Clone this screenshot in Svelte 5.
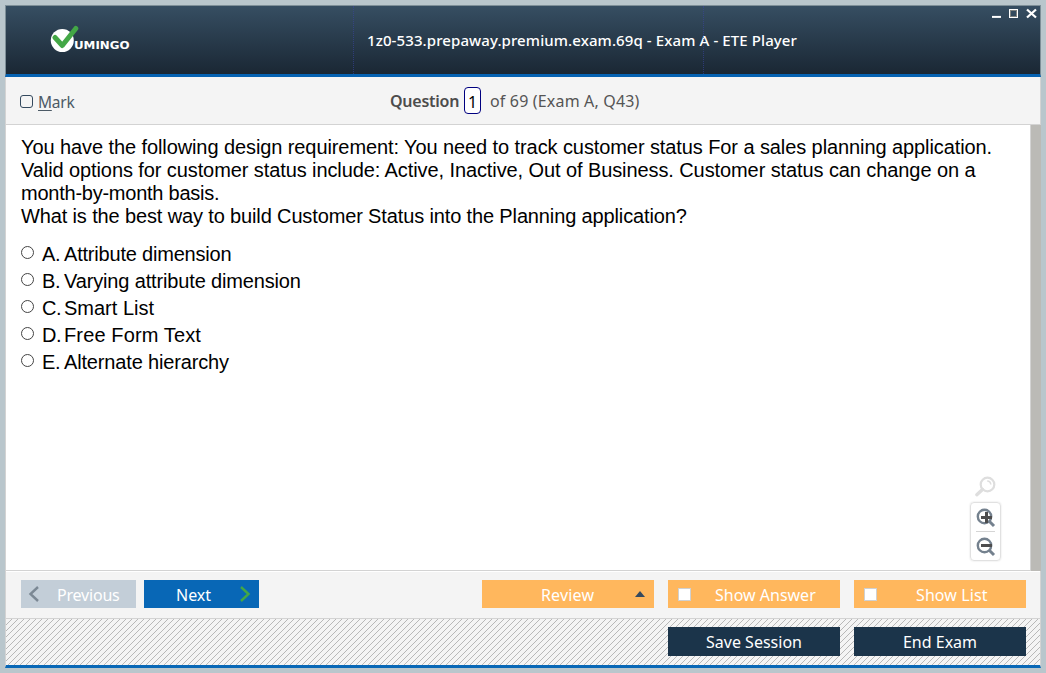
<script>
  const options = [
    ['A.', 'Attribute dimension', -0.2],
    ['B.', 'Varying attribute dimension', -0.15],
    ['C.', 'Smart List', 0],
    ['D.', 'Free Form Text', 0.13],
    ['E.', 'Alternate hierarchy', -0.16]
  ];
</script>

<div class="window">
  <header>
    <svg class="logo" width="84" height="30" viewBox="0 0 84 30">
      <circle cx="12.3" cy="15.5" r="11.5" fill="#fff" />
      <path d="M5 12.5 L12.3 20.5 L25.8 3.5" fill="none" stroke="#43a746" stroke-width="5" stroke-linecap="round" stroke-linejoin="round" />
      <text x="24" y="24" textLength="55.5" lengthAdjust="spacingAndGlyphs" fill="#fff">UMINGO</text>
    </svg>
    <div class="title">1z0-533.prepaway.premium.exam.69q - Exam A - ETE Player</div>
    <svg class="controls" width="46" height="14" viewBox="0 0 46 14">
      <path d="M1 10.9 H10" stroke="#fff" stroke-width="2" />
      <rect x="18.5" y="3.5" width="8" height="8" fill="none" stroke="#fff" />
      <rect x="19.5" y="4.5" width="6" height="6" fill="none" stroke="#80827f" />
      <path d="M36 3.5 L45 11.5 M45 3.5 L36 11.5" stroke="#fff" stroke-width="2.3" />
    </svg>
  </header>

  <section class="info">
    <label class="mark"><i></i><span><u>M</u>ark</span></label>
    <div class="position"><b>Question</b><span class="num">1</span><span class="of">of 69 (Exam A, Q43)</span></div>
  </section>

  <main>
    <div class="content">
      <div class="question">
        <p class="l1">You have the following design requirement: You need to track customer status For a sales planning application.</p>
        <p class="l2">Valid options for customer status include: Active, Inactive, Out of Business. Customer status can change on a</p>
        <p class="l3">month-by-month basis.</p>
        <p class="l4">What is the best way to build Customer Status into the Planning application?</p>
      </div>
      {#each options as [letter, text, spacing]}
        <div class="option"><i></i><span class="letter">{letter}</span><span style:letter-spacing="{spacing}px">{text}</span></div>
      {/each}
      <div class="zoom">
        <svg width="24" height="22" viewBox="0 0 24 22" fill="none" stroke="#dedede">
          <circle cx="13.5" cy="8.5" r="6.8" stroke-width="2.2" />
          <path d="M8.5 13.5 L2.8 18.7" stroke-width="3.4" stroke-linecap="round" />
          <path d="M13.2 5 Q16.5 5 16.8 8.5" stroke-width="1.6" />
        </svg>
        <div class="zoombox">
          <svg width="20" height="20" viewBox="0 0 20 20" fill="none">
            <circle cx="8.5" cy="8.5" r="6.7" stroke="#74818e" stroke-width="2.4" />
            <path d="M13 13 L18 18" stroke="#74818e" stroke-width="3" />
            <path d="M5 9.5 H16 M10.5 4 V15" stroke="#4d4d4d" stroke-width="3" />
          </svg>
          <hr />
          <svg width="20" height="20" viewBox="0 0 20 20" fill="none">
            <circle cx="8.5" cy="8.5" r="6.7" stroke="#74818e" stroke-width="2.4" />
            <path d="M13 13 L18 18" stroke="#74818e" stroke-width="3" />
            <path d="M5 8.5 H16" stroke="#4d4d4d" stroke-width="3" />
          </svg>
        </div>
      </div>
    </div>
    <div class="scroll"></div>
  </main>

  <nav>
    <button class="prev">
      <svg width="12" height="18" viewBox="0 0 12 18"><path d="M10 2 L2.5 9 L10 16" fill="none" stroke="#7b8894" stroke-width="2.4" /></svg>
      <span>Previous</span>
    </button>
    <button class="next">
      <span>Next</span>
      <svg width="12" height="18" viewBox="0 0 12 18"><path d="M2 2 L9.5 9 L2 16" fill="none" stroke="#43a746" stroke-width="2.4" /></svg>
    </button>
    <button class="orange review"><span>Review</span><svg width="10" height="6" viewBox="0 0 10 6"><path d="M0 6 L5 0 L10 6Z" fill="#34495e" /></svg></button>
    <button class="orange"><i></i><span class="ans">Show Answer</span></button>
    <button class="orange"><i></i><span class="list">Show List</span></button>
  </nav>

  <footer>
    <svg class="hatch" width="100%" height="100%" shape-rendering="crispEdges">
      <defs><pattern id="lines" width="6" height="6" patternUnits="userSpaceOnUse">
        {#each [0, 1, 2, 3, 4, 5] as n}
          <rect x={n} y={5 - n} width="1" height="1" fill="#b8b8b8" />
        {/each}
      </pattern></defs>
      <rect width="100%" height="100%" fill="url(#lines)" />
    </svg>
    <button class="save">Save Session</button>
    <button class="end">End Exam</button>
  </footer>
</div>

<style>
  :global(body) { background: #b9c6cc; overflow: hidden; }
  * { box-sizing: border-box; }
  .window { width: 1036px; height: 663px; margin: 5px; font-family: "Noto Sans", sans-serif; font-size: 16px; display: flex; flex-direction: column; }
  header { height: 72px; display: flex; border: 1px solid #7e8f98; border-bottom: 3px solid #0562b2; background: linear-gradient(#364e62, #1a2734); color: #fff; position: relative; }
  header::before { content: ""; position: absolute; left: 347px; top: 0; width: 349px; height: 68px; border: 1px dotted #3944a0; border-width: 0 1px; opacity: .6; }
  .logo { margin: 19px 0 0 44px; flex: none; }
  .logo text { font: bold 9.8px "DejaVu Sans", sans-serif; }
  .title { margin: 23px 0 0 233px; width: 430px; font: 500 15px/22px "Noto Sans", sans-serif; white-space: nowrap; letter-spacing: .1px; }
  .controls { margin: 0 3px 0 auto; flex: none; }
  .info { height: 48px; display: flex; background: #f4f4f4; border: solid #d3d3d3; border-width: 0 1px 1px; color: #555; }
  .mark { width: 384px; padding: 14px 0 0 14px; display: flex; gap: 5px; line-height: 22px; color: #4c5a66; font-size: 15.5px; letter-spacing: -.25px; }
  .mark i { width: 13px; height: 13px; margin-top: 4px; border: 1px solid #34495e; border-radius: 3px; }
  .mark u { text-underline-offset: 2px; }
  .position { display: flex; padding-top: 9px; line-height: 31px; white-space: nowrap; }
  .position b { font-weight: 600; color: #4c4c4c; width: 74px; letter-spacing: -.25px; }
  .num { width: 17px; height: 27px; line-height: 29px; margin-top: 1px; border: 1px solid #000080; border-radius: 4px; background: #fff; color: #000; text-align: center; }
  .of { margin-left: 9px; letter-spacing: .17px; }
  main { height: 446px; display: flex; border-left: 1px solid #d3d3d3; background: #fff; }
  .content { width: 1025px; padding: 11px 0 0 15px; position: relative; font: 20px/23px "Liberation Sans", Arial, sans-serif; color: #000; border: solid #d3d3d3; border-width: 0 1px 1px 0; }
  .scroll { flex: 1; background: #bbbab6; }
  .question { height: 105px; white-space: nowrap; }
  p { margin: 0; }
  .l1 { letter-spacing: -.09px; }
  .l2 { letter-spacing: -.093px; }
  .l3 { letter-spacing: -.24px; }
  .l4 { letter-spacing: -.135px; }
  .option { display: flex; height: 27px; line-height: 27px; white-space: nowrap; }
  .option i { width: 13px; height: 13px; margin: 5px 8px 0 0; border: 1px solid #444; border-radius: 50%; }
  .letter { width: 22px; letter-spacing: -.4px; }
  .zoom { position: absolute; left: 964px; top: 351px; width: 31px; }
  .zoom svg { display: block; margin-left: 4px; }
  .zoombox { height: 59px; margin-top: 4px; padding-top: 5px; border: 1px solid #e1e1e1; border-radius: 4px; box-shadow: 0 0 2px #ddd; }
  .zoom .zoombox svg { margin-left: 5px; }
  hr { width: 19px; margin: 3px 0 5px 5px; border: 0; border-top: 1px solid #d5d5d5; }
  nav { height: 48px; display: flex; padding: 9px 14px 0 15px; border: solid #d3d3d3; border-width: 0 1px 1px; background: #f4f4f4; box-shadow: inset 0 1px #fff; }
  button { border: 0; border-radius: 0; padding: 0; font: 16px/28px "Noto Sans", sans-serif; color: #fff; height: 28px; display: flex; align-items: center; white-space: nowrap; }
  nav span { padding-top: 2px; }
  .prev { width: 115px; background: #c3ced8; margin-right: 8px; padding-left: 7px; }
  .prev span { margin-left: 17px; letter-spacing: -.2px; }
  .next { width: 115px; background: #0867b6; margin-right: 223px; padding-left: 32px; }
  .next svg { margin-left: 28px; }
  .orange { width: 172px; background: #ffb75d; margin-right: 14px; }
  .orange:last-child { margin-right: 0; }
  .review { padding-left: 59px; }
  .review span { letter-spacing: .17px; }
  .review svg { margin-left: 41px; }
  .orange i { width: 13px; height: 13px; border: 1px solid #d0d0d0; background: #fff; margin-left: 10px; }
  .orange i + span { margin-left: 24px; }
  .orange i + .list { margin-left: 39px; letter-spacing: .1px; }
  footer { flex: 1; display: flex; justify-content: flex-end; gap: 14px; padding: 8px 14px 0; background: #f4f4f4; border: solid #d3d3d3; border-width: 0 1px; border-bottom: 3px solid #0867b6; position: relative; }
  .hatch { position: absolute; inset: 0; }
  footer button { width: 172px; height: 29px; background: #1b344a; justify-content: center; position: relative; }
</style>
